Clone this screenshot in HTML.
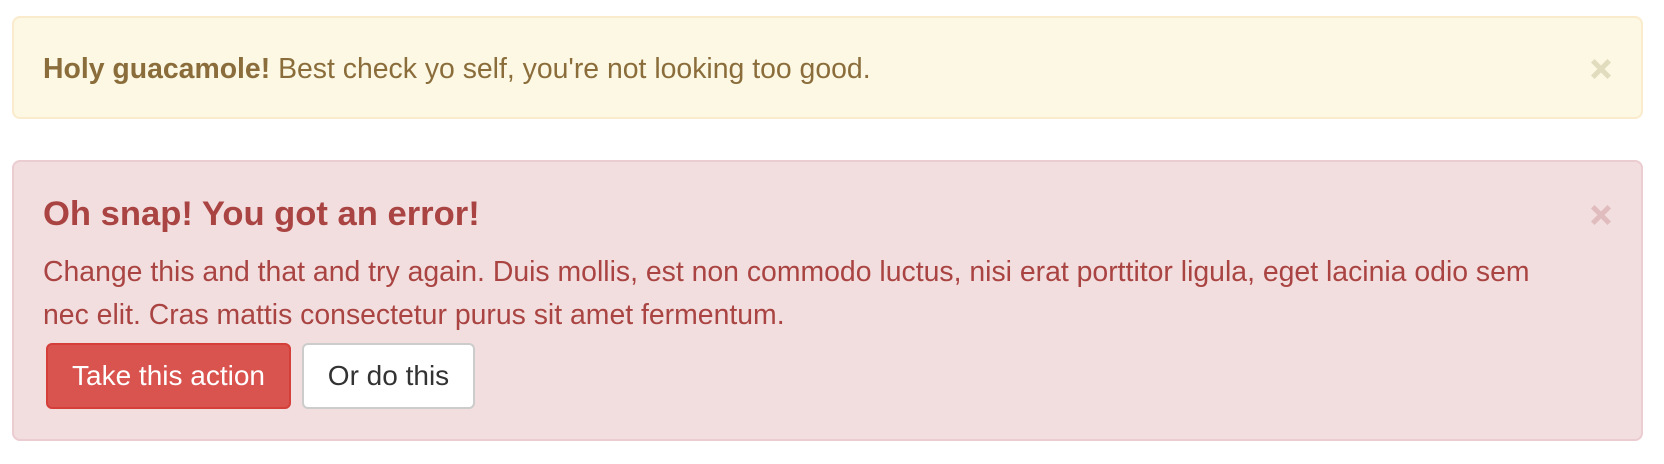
<!DOCTYPE html>
<html><head><style>
body{margin:0;background:#fff;font-family:"Liberation Sans",Arial,sans-serif;width:1664px;height:464px;overflow:hidden;position:relative}
.box{position:absolute;left:12px;width:1627px;border:2px solid;border-radius:8px}
.warn{top:16px;height:99px;background:#fcf8e3;border-color:#faebcc;color:#8a6d3b}
.err{top:160px;height:277px;background:#f2dede;border-color:#ebccd1;color:#a94442}
.t{position:absolute;left:29px;white-space:nowrap;font-size:28.4px}
.x{position:absolute;left:1576px;width:22px;height:22px}
.btn{position:absolute;top:181px;height:62px;border-radius:6px;border:2px solid;font-size:28px;line-height:62px;text-align:center;box-sizing:content-box}
</style></head><body>
<div class="box warn">
 <div class="t" style="top:34px;line-height:34px"><b>Holy guacamole!</b> Best check yo self, you're not looking too good.</div>
 <svg class="x" style="top:40px" viewBox="0 0 24 24"><path d="M3 3L21 21M21 3L3 21" stroke="#e2dcbf" stroke-width="5.5"/></svg>
</div>
<div class="box err">
 <div class="t" style="top:32px;font-size:34.6px;line-height:40px;font-weight:bold">Oh snap! You got an error!</div>
 <svg class="x" style="top:42px" viewBox="0 0 24 24"><path d="M3 3L21 21M21 3L3 21" stroke="#e0bcbe" stroke-width="5.5"/></svg>
 <div class="t" style="top:89px;line-height:43px">Change this and that and try again. Duis mollis, est non commodo luctus, nisi erat porttitor ligula, eget lacinia odio sem<br>nec elit. Cras mattis consectetur purus sit amet fermentum.</div>
 <div class="btn" style="left:32px;width:241px;background:#d9534f;border-color:#d43f3a;color:#fff">Take this action</div>
 <div class="btn" style="left:288px;width:169px;background:#fff;border-color:#ccc;color:#333">Or do this</div>
</div>
</body></html>
